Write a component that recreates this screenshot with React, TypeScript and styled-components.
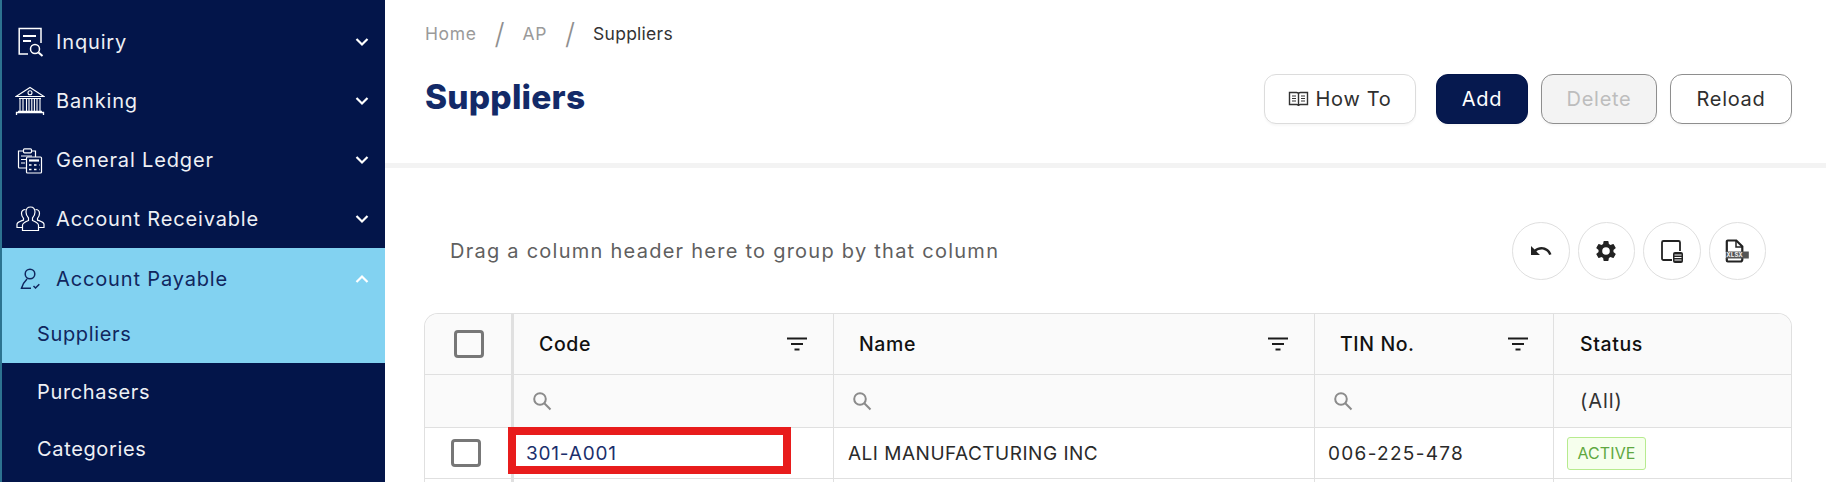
import React from "react";
import styled, { createGlobalStyle } from "styled-components";

const Global = createGlobalStyle`
  html, body { margin: 0; padding: 0; height: 482px; overflow: hidden; background: #fff; }
  body { font-family: Inter, "Liberation Sans", sans-serif; color: #2b2b2b; }
  * { box-sizing: border-box; }
`;

const Page = styled.div`
  width: 1826px; height: 482px; overflow: hidden; display: flex; background: #fff;
`;
const Sidebar = styled.nav`
  width: 385px; flex: none; height: 482px; background: #03154a; border-left: 2px solid #2d7390;
  padding-top: 12px; overflow: hidden;
`;
const MenuItem = styled.div<{ $active?: boolean }>`
  height: 59px; display: flex; align-items: center; padding-left: 13px; padding-right: 16px;
  color: ${p => (p.$active ? "#10265e" : "#eef0f5")};
  font-size: 20px; letter-spacing: 0.85px; font-weight: 400;
`;
const IconSlot = styled.span`
  width: 30px; height: 30px; margin-right: 11px; flex: none; display: flex; align-items: center; justify-content: center;
  svg { display: block; }
`;
const MenuLabel = styled.span`flex: 1; white-space: nowrap;`;
const ActiveBlock = styled.div`
  background: #82d2f1; height: 115px; padding-top: 1px;
`;
const SubItem = styled.div<{ $active?: boolean }>`
  height: ${p => (p.$active ? 52 : 57)}px; display: flex; align-items: center; padding-left: 35px;
  color: ${p => (p.$active ? "#10265e" : "#eef0f5")};
  font-size: 20px; letter-spacing: 0.65px; font-weight: 400;
`;
const Main = styled.main`flex: 1; min-width: 0; display: flex; flex-direction: column;`;
const Header = styled.header`
  height: 168px; border-bottom: 5px solid #f3f3f3; padding: 22px 34px 0 40px; flex: none;
`;
const Crumbs = styled.div`
  display: flex; align-items: center; height: 22px; font-size: 17.5px; letter-spacing: 0.6px; color: #9a9a9a;
`;
const CrumbSep = styled.span`font-size: 29px; font-weight: 300; color: #8f8f8f; margin: 0 18px 0 18px; letter-spacing: 0;`;
const CrumbNow = styled.span`color: #333; letter-spacing: 0.25px;`;
const TitleRow = styled.div`
  display: flex; justify-content: space-between; align-items: center; margin-top: 28px; height: 50px;
`;
const Title = styled.h1`
  margin: 0; font-size: 33.5px; font-weight: 800; color: #132a68; letter-spacing: 0.2px;
`;
const Actions = styled.div`display: flex; position: relative; top: 2px;`;
const Btn = styled.button<{ $w: number; $kind?: string; $ml: number }>`
  width: ${p => p.$w}px; height: 50px; margin-left: ${p => p.$ml}px; border-radius: 12px;
  font-family: inherit; font-size: 20px; letter-spacing: 0.7px; display: flex; align-items: center; justify-content: center; gap: 6px;
  border: 1px solid ${p => (p.$kind === "soft" ? "#dcdcdc" : p.$kind === "primary" ? "#03154a" : "#8e8e8e")};
  background: ${p => (p.$kind === "primary" ? "#06194f" : p.$kind === "disabled" ? "#f3f3f3" : "#fff")};
  color: ${p => (p.$kind === "primary" ? "#fff" : p.$kind === "disabled" ? "#bdbdbd" : "#2f2f2f")};
  box-shadow: 0 2px 2px rgba(0,0,0,0.03); font-weight: 400;
`;
const Content = styled.section`padding: 54px 34px 0 39px; position: relative; flex: 1;`;
const GroupBar = styled.div`
  display: flex; align-items: center; justify-content: space-between; height: 58px; padding: 0 26px 0 26px; margin-bottom: 33px;
`;
const GroupHint = styled.span`font-size: 20px; letter-spacing: 1.25px; color: #5f5f5f;`;
const Circles = styled.div`display: flex; gap: 8px;`;
const Circle = styled.span`
  width: 57.5px; height: 57.5px; border: 1px solid #dfdfdf; border-radius: 50%; display: flex; align-items: center; justify-content: center; color: #2b2b2b;
`;
const Grid = styled.div`
  display: grid; grid-template-columns: 89px 320px 481px 239px 239px; grid-template-rows: 61px 53px 51px 40px;
  border: 1px solid #e0e0e0; border-bottom: none; border-top-left-radius: 14px; border-top-right-radius: 14px; overflow: hidden; width: 1368px;
`;
const Cell = styled.div<{ $head?: boolean; $first?: boolean; $last?: boolean; $center?: boolean; $pl?: number; $pr?: number }>`
  display: flex; align-items: center; justify-content: ${p => (p.$center ? "center" : "flex-start")};
  background: ${p => (p.$head ? "#fafafa" : "#fff")};
  border-bottom: 1px solid #e0e0e0;
  border-right: ${p => (p.$first ? "3px solid #e0e0e0" : p.$last ? "none" : "1px solid #e0e0e0")};
  padding-left: ${p => p.$pl ?? 0}px; padding-right: ${p => p.$pr ?? 0}px;
`;
const HeadCell = styled(Cell)`
  justify-content: space-between; font-size: 19.5px; font-weight: 500; letter-spacing: 0.6px; color: #111;
`;
const CheckBox = styled.span<{ $shift?: number }>`
  width: 30px; height: 28px; border: 3px solid #777; border-radius: 4px; display: block; position: relative; left: ${p => p.$shift ?? 0}px;
`;
const RowText = styled.span<{ $link?: boolean; $track: number }>`
  font-size: 19px; letter-spacing: ${p => p.$track}px; color: ${p => (p.$link ? "#1b2f6c" : "#2a2a2a")}; white-space: nowrap;
`;
const Pill = styled.span`
  font-size: 16px; letter-spacing: 0.1px; color: #5fa83f; background: #f6ffed; border: 1px solid #b7eb8f; border-radius: 3px;
  height: 33px; width: 79px; display: flex; align-items: center; justify-content: center;
`;
const AllText = styled.span`font-size: 20px; letter-spacing: 0.9px; color: #333;`;
const Highlight = styled.div`
  position: absolute; left: 123px; top: 259px; width: 283px; height: 47px; border: 8px solid #e81c1c; pointer-events: none;
`;
const XlsLabel = styled.text`
  font-family: "Liberation Mono", monospace; font-size: 6.6px; font-weight: 700; fill: #f0f0f0;
`;

const Chevron = ({ up, color = "#fff" }: { up?: boolean; color?: string }) => (
  <svg width="14" height="10" viewBox="0 0 14 10" fill="none" stroke={color} strokeWidth="2.2">
    <path d={up ? "M1.5 8 L7 2.5 L12.5 8" : "M1.5 2 L7 7.5 L12.5 2"} />
  </svg>
);
const InquiryIcon = () => (
  <svg width="28" height="30" viewBox="0 0 28 30" fill="none" stroke="#fff" strokeWidth="1.5">
    <path d="M12 27H3.2V1.5H25V16" />
    <path d="M7 9h13M7 14h8" strokeWidth="2" />
    <circle cx="19" cy="22" r="4.5" />
    <path d="M22.5 25.5l4 3.5" strokeWidth="2" />
  </svg>
);
const BankIcon = () => (
  <svg width="30" height="30" viewBox="0 0 30 30" fill="none" stroke="#fff" strokeWidth="1.1">
    <path d="M1 10.5L15 1.5L29 10.5Z" />
    <circle cx="15" cy="6.8" r="2" />
    <path d="M4 12.5h22M5 13v12M8 13v12M11.5 13v12M14 13v12M16.8 13v12M19.4 13v12M22 13v12M25 13v12" />
    <path d="M3 25.5h24M1.5 29v-2.5h27V29" strokeWidth="1.3" />
  </svg>
);
const LedgerIcon = () => (
  <svg width="26" height="28" viewBox="0 0 26 28" fill="none" stroke="#fff" strokeWidth="1.2">
    <path d="M9 22H2.5a1 1 0 0 1-1-1V5h5M14 5h4.500V11" />
    <rect x="6.500" y="2.800" width="8" height="4" rx="1" />
    <path d="M4 10h11M4 13.500h5M4 17h4" />
    <rect x="9.500" y="11" width="15" height="16" rx="1" />
    <path d="M12 14.500h10" strokeWidth="2.200" />
    <path d="M12 19h2.500M17 19h2.500M22 19h.5M12 23.500h2.500M17 23.500h2.500M22 23.500h.5" strokeWidth="1.600" />
  </svg>
);
const PeopleIcon = () => (
  <svg width="29" height="26" viewBox="0 0 29 26" fill="none" stroke="#fff" strokeWidth="1.2">
    <path d="M14.500 1c-3 0-4.500 2-4.500 5 0 2.500 1 4.500 2.500 6v2.500c-2.500 1-5.500 2-6 4.500v5.500h16V19c-.5-2.500-3.500-3.500-6-4.500V12c1.500-1.500 2.500-3.500 2.500-6 0-3-1.500-5-4.500-5z" />
    <path d="M9.500 3.500C7 3.500 5.500 5 5.500 7.500c0 2 .8 3.500 2 4.800v1.800c-2.500 1-6 1.700-6.500 4v3.400h5" />
    <path d="M19.500 3.500c2.500 0 4 1.500 4 4 0 2-.8 3.500-2 4.800v1.800c2.500 1 6 1.700 6.500 4v3.400h-5" />
  </svg>
);
const PayIcon = () => (
  <svg width="21" height="22" viewBox="0 0 21 22" fill="none" stroke="#10265e" strokeWidth="1.500">
    <circle cx="10" cy="6" r="4.800" />
    <path d="M7 11C4.500 13.500 2.500 16.500 1.500 20.300H11" />
    <path d="M13.500 18l2 2 3.800-3.800" />
  </svg>
);
const BookIcon = () => (
  <svg width="21" height="18" viewBox="0 0 20 18" fill="none" stroke="#333" strokeWidth="1.400">
    <path d="M1 2.500h7c1 0 2 .5 2 1.500 0-1 1-1.500 2-1.500h7v12h-7c-1 0-2 .5-2 1.500 0-1-1-1.500-2-1.500H1zM10 4v12" />
    <path d="M3.500 6h4M3.500 8.500h4M3.500 11h4M12.500 6h4M12.500 8.500h4M12.500 11h4" strokeWidth="1.100" />
  </svg>
);
const FilterIcon = () => (
  <svg width="20" height="14" viewBox="0 0 20 14" fill="none" stroke="#1c1c1c" strokeWidth="2">
    <path d="M0 1.500h20M4 7h12M7.500 12.500h5" />
  </svg>
);
const SearchIcon = () => (
  <svg width="20" height="20" viewBox="0 0 20 20" fill="none" stroke="#8b8b8b" strokeWidth="2">
    <circle cx="8" cy="8" r="5.800" />
    <path d="M12.300 12.300L18.500 18.500" />
  </svg>
);
const UndoIcon = () => (
  <svg width="24" height="24" viewBox="0 0 24 24" fill="#222">
    <path d="M12.500 8c-2.650 0-5.050.99-6.900 2.600L2 7v9h9l-3.620-3.620c1.390-1.160 3.160-1.880 5.120-1.880 3.540 0 6.550 2.310 7.600 5.500l2.370-.78C21.080 11.030 17.150 8 12.500 8z" />
  </svg>
);
const GearIcon = () => (
  <svg width="24" height="24" viewBox="0 0 24 24" fill="#222">
    <path fillRule="evenodd" d="M19.430 12.980c.04-.32.07-.64.07-.98s-.03-.66-.07-.98l2.110-1.650a.5.5 0 0 0 .12-.64l-2-3.460a.5.5 0 0 0-.61-.22l-2.490 1a7.300 7.300 0 0 0-1.690-.98l-.38-2.650A.49.49 0 0 0 14 2h-4a.49.49 0 0 0-.49.42l-.38 2.650c-.61.25-1.170.59-1.690.98l-2.490-1a.5.5 0 0 0-.61.22l-2 3.460a.49.49 0 0 0 .12.64l2.110 1.650c-.04.32-.07.65-.07.98s.03.66.07.98l-2.110 1.650a.5.5 0 0 0-.12.64l2 3.460c.12.22.39.3.61.22l2.490-1c.52.4 1.080.73 1.690.98l.38 2.650c.03.24.24.42.49.42h4c.25 0 .46-.18.49-.42l.38-2.650c.61-.25 1.170-.59 1.690-.98l2.490 1c.23.09.49 0 .61-.22l2-3.460a.5.5 0 0 0-.12-.64l-2.110-1.650zM12 15.800a3.800 3.800 0 1 1 0-7.600 3.800 3.800 0 0 1 0 7.600z" />
  </svg>
);
const PanelIcon = () => (
  <svg width="24" height="24" viewBox="0 0 24 24" fill="none">
    <path d="M12 21H3.500A1.500 1.500 0 0 1 2 19.500v-16A1.500 1.500 0 0 1 3.500 2h15A1.500 1.500 0 0 1 20 3.500V12" stroke="#222" strokeWidth="1.800" />
    <rect x="13" y="13" width="10" height="11" rx="2" fill="#222" />
    <path d="M14.500 16h7M14.500 18.500h7M14.500 21h7" stroke="#fff" strokeWidth="1" />
  </svg>
);
const XlsIcon = () => (
  <svg width="24" height="24" viewBox="0 0 24 24" fill="none">
    <path d="M1.800 13V2.500a1 1 0 0 1 1-1h8.500l6 6V13M1.800 19v2.500a1 1 0 0 0 1 1h12.500a2 2 0 0 0 2-2V19" stroke="#222" strokeWidth="2.200" />
    <path d="M11 1.500V8h6.500" stroke="#222" strokeWidth="1.500" />
    <rect x="0.800" y="12.500" width="23" height="7" fill="#555" />
    <XlsLabel x="1.600" y="18.300">XLSX</XlsLabel>
  </svg>
);

const menu = [
  { label: "Inquiry", icon: <InquiryIcon /> },
  { label: "Banking", icon: <BankIcon /> },
  { label: "General Ledger", icon: <LedgerIcon /> },
  { label: "Account Receivable", icon: <PeopleIcon /> },
];

export default function App() {
  return (
    <Page>
      <Global />
      <Sidebar>
        {menu.map(m => (
          <MenuItem key={m.label}>
            <IconSlot>{m.icon}</IconSlot>
            <MenuLabel>{m.label}</MenuLabel>
            <Chevron />
          </MenuItem>
        ))}
        <ActiveBlock>
          <MenuItem $active>
            <IconSlot><PayIcon /></IconSlot>
            <MenuLabel>Account Payable</MenuLabel>
            <Chevron up />
          </MenuItem>
          <SubItem $active>Suppliers</SubItem>
        </ActiveBlock>
        <SubItem>Purchasers</SubItem>
        <SubItem>Categories</SubItem>
      </Sidebar>
      <Main>
        <Header>
          <Crumbs>
            <span>Home</span><CrumbSep>/</CrumbSep><span>AP</span><CrumbSep>/</CrumbSep><CrumbNow>Suppliers</CrumbNow>
          </Crumbs>
          <TitleRow>
            <Title>Suppliers</Title>
            <Actions>
              <Btn $w={152} $ml={0} $kind="soft"><BookIcon />How To</Btn>
              <Btn $w={92} $ml={20} $kind="primary">Add</Btn>
              <Btn $w={116} $ml={13} $kind="disabled">Delete</Btn>
              <Btn $w={122} $ml={13}>Reload</Btn>
            </Actions>
          </TitleRow>
        </Header>
        <Content>
          <GroupBar>
            <GroupHint>Drag a column header here to group by that column</GroupHint>
            <Circles>
              <Circle><UndoIcon /></Circle>
              <Circle><GearIcon /></Circle>
              <Circle><PanelIcon /></Circle>
              <Circle><XlsIcon /></Circle>
            </Circles>
          </GroupBar>
          <Grid>
            <Cell $head $first $center><CheckBox $shift={1} /></Cell>
            <HeadCell $head $pl={25} $pr={26}>Code<FilterIcon /></HeadCell>
            <HeadCell $head $pl={25} $pr={26}>Name<FilterIcon /></HeadCell>
            <HeadCell $head $pl={25} $pr={25}>TIN No.<FilterIcon /></HeadCell>
            <HeadCell $head $last $pl={26}>Status</HeadCell>

            <Cell $head $first />
            <Cell $head $pl={18}><SearchIcon /></Cell>
            <Cell $head $pl={18}><SearchIcon /></Cell>
            <Cell $head $pl={18}><SearchIcon /></Cell>
            <Cell $head $last $pl={26}><AllText>(All)</AllText></Cell>

            <Cell $first $center><CheckBox $shift={-2} /></Cell>
            <Cell $pl={12}><RowText $link $track={0.8}>301-A001</RowText></Cell>
            <Cell $pl={14}><RowText $track={0.5}>ALI MANUFACTURING INC</RowText></Cell>
            <Cell $pl={13}><RowText $track={1.3}>006-225-478</RowText></Cell>
            <Cell $last $pl={13}><Pill>ACTIVE</Pill></Cell>

            <Cell $first />
            <Cell />
            <Cell />
            <Cell />
            <Cell $last />
          </Grid>
          <Highlight />
        </Content>
      </Main>
    </Page>
  );
}
